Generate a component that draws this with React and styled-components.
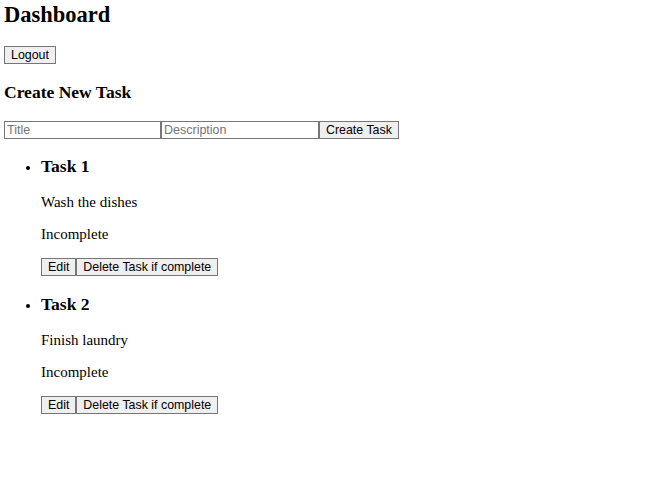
import React, { useState } from 'react';
import styled, { createGlobalStyle } from 'styled-components';

const GlobalStyle = createGlobalStyle`
  body {
    margin: 0;
    background: #fff;
    color: #000;
    font-family: "Liberation Serif", "Times New Roman", serif;
    font-size: 15px;
  }
`;

const Page = styled.div`
  padding: 2px 4px 0;
`;

const Title = styled.h2`
  font-size: 22.5px;
  font-weight: bold;
  margin: 0 0 17.7px;
`;

const Heading = styled.h3`
  font-size: 17.55px;
  font-weight: bold;
  margin: 17.55px 0;
`;

const TaskTitle = styled(Heading)`
  margin-bottom: 16.55px;
`;

const Toolbar = styled.div`
  display: flex;
  padding-bottom: 1px;
`;

const Button = styled.button`
  font-family: "Liberation Sans", Arial, sans-serif;
  font-size: 12.4px;
  color: #000;
  background: #efefef;
  border: 1px solid #767676;
  border-radius: 0;
  padding: 1px 6px;
  margin: 0;
`;

const Form = styled.form`
  display: flex;
  margin: 0;
`;

const Input = styled.input`
  box-sizing: border-box;
  width: ${({ $w }) => $w}px;
  font-family: "Liberation Sans", Arial, sans-serif;
  font-size: 12.5px;
  border: 1px solid #767676;
  border-radius: 0;
  padding: 1px 2px;
  margin: 0;
  &::placeholder {
    color: #757575;
  }
`;

const TaskList = styled.ul`
  margin: 15px 0;
  padding-left: 37px;
`;

const TaskItem = styled.li`
  list-style: disc;
  & + & {
    padding-top: 1px;
  }
`;

const Text = styled.p`
  margin: 15px 0;
`;

const Actions = styled.div`
  display: flex;
`;

const tasks = [
  { id: 1, title: 'Task 1', description: 'Wash the dishes', completed: false },
  { id: 2, title: 'Task 2', description: 'Finish laundry', completed: false },
];

export default function App() {
  const [title, setTitle] = useState('');
  const [description, setDescription] = useState('');

  return (
    <Page>
      <GlobalStyle />
      <Title>Dashboard</Title>
      <Toolbar>
        <Button>Logout</Button>
      </Toolbar>
      <Heading>Create New Task</Heading>
      <Form onSubmit={e => e.preventDefault()}>
        <Input $w={157} placeholder="Title" value={title} onChange={e => setTitle(e.target.value)} />
        <Input $w={158} placeholder="Description" value={description} onChange={e => setDescription(e.target.value)} />
        <Button type="submit">Create Task</Button>
      </Form>
      <TaskList>
        {tasks.map(task => (
          <TaskItem key={task.id}>
            <TaskTitle>{task.title}</TaskTitle>
            <Text>{task.description}</Text>
            <Text>{task.completed ? 'Complete' : 'Incomplete'}</Text>
            <Actions>
              <Button>Edit</Button>
              <Button>Delete Task if complete</Button>
            </Actions>
          </TaskItem>
        ))}
      </TaskList>
    </Page>
  );
}
